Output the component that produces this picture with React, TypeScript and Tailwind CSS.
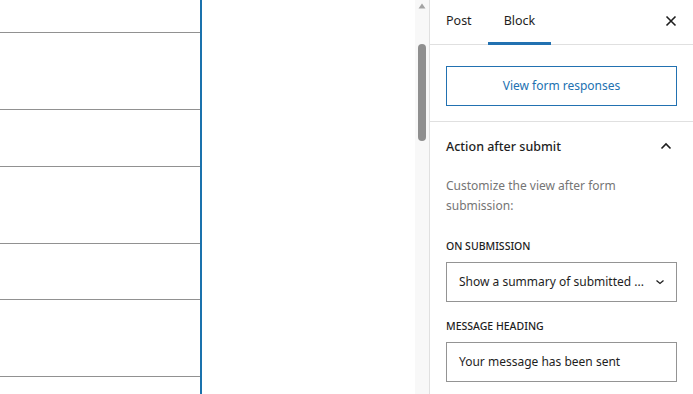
import React from 'react';

const rowHeights = [33, 77, 57, 77, 56, 77];

function CanvasRows() {
  return (
    <div className="flex h-full w-[202px] flex-col border-r-2 border-[#1a72ad]">
      {rowHeights.map((h, i) => (
        <div key={i} className="shrink-0 border-b border-[#919191]" style={{ height: h }} />
      ))}
      <div className="flex-1" />
    </div>
  );
}

function Scrollbar() {
  return (
    <div className="relative flex h-full w-[14px] shrink-0 flex-col items-center bg-[#f8f8f8]">
      <svg width="8" height="6" viewBox="0 0 8 6" className="mt-[3px]">
        <path d="M4 0.5 L7.5 5.5 L0.5 5.5 Z" fill="#a3a3a3" />
      </svg>
      <div className="mt-[35px] h-[97px] w-[8px] rounded-full bg-[#8f8f8f]" />
    </div>
  );
}

function Sidebar() {
  return (
    <div className="flex h-full w-[264px] shrink-0 flex-col border-l border-[#e0e0e0] bg-white text-[12px] text-[#1e1e1e]">
      <div className="flex h-[45px] shrink-0 items-stretch border-b border-[#e0e0e0]">
        <div className="flex items-center px-4 pb-[2px] text-[12.5px]">Post</div>
        <div className="relative flex items-center px-4 pb-[2px] text-[12.5px]">
          Block
          <div className="absolute bottom-[-1px] left-0 right-0 h-[3px] bg-[#2271b1]" />
        </div>
        <div className="flex-1" />
        <button className="mr-[10px] flex w-6 items-center justify-center pb-[3px]">
          <svg width="24" height="24" viewBox="0 0 24 24">
            <path d="M7.5 7.5 L16.5 16.5 M16.5 7.5 L7.5 16.5" stroke="#1e1e1e" strokeWidth="1.6" />
          </svg>
        </button>
      </div>

      <div className="shrink-0 border-b border-[#e0e0e0] px-4 pb-[15px] pt-[21px]">
        <button className="flex h-10 w-full items-center justify-center border border-[#2271b1] text-[12px] text-[#2271b1]">
          View form responses
        </button>
      </div>

      <div className="px-4">
        <div className="flex h-[50px] items-center justify-between">
          <span className="text-[12.5px] font-medium">Action after submit</span>
          <svg width="24" height="24" viewBox="0 0 24 24" className="mr-[-1px]">
            <path d="M7.5 13.5 L12 9 L16.5 13.5" stroke="#1e1e1e" strokeWidth="1.6" fill="none" />
          </svg>
        </div>
        <p className="mt-1 w-[190px] leading-[20px] text-[#757575]">
          Customize the view after form submission:
        </p>
        <div className="mt-[22px] text-[10.5px] font-medium uppercase leading-[16px]">On submission</div>
        <div className="mt-2 flex h-10 items-center justify-between border border-[#949494] pl-3 pr-[10px]">
          <span className="truncate whitespace-nowrap">Show a summary of submitted ...</span>
          <svg width="12" height="12" viewBox="0 0 12 12" className="shrink-0">
            <path d="M2.5 4.5 L6 7.5 L9.5 4.5" stroke="#1e1e1e" strokeWidth="1.3" fill="none" />
          </svg>
        </div>
        <div className="mt-4 text-[10.5px] font-medium uppercase leading-[16px]">Message heading</div>
        <div className="mt-2 flex h-10 items-center border border-[#949494] px-3">
          <span>Your message has been sent</span>
        </div>
      </div>
    </div>
  );
}

export default function App() {
  return (
    <div
      className="flex h-[394px] w-[693px] overflow-hidden bg-white"
      style={{ fontFamily: '"Noto Sans", "Open Sans", sans-serif' }}
    >
      <div className="h-full w-[415px] shrink-0">
        <CanvasRows />
      </div>
      <Scrollbar />
      <Sidebar />
    </div>
  );
}
